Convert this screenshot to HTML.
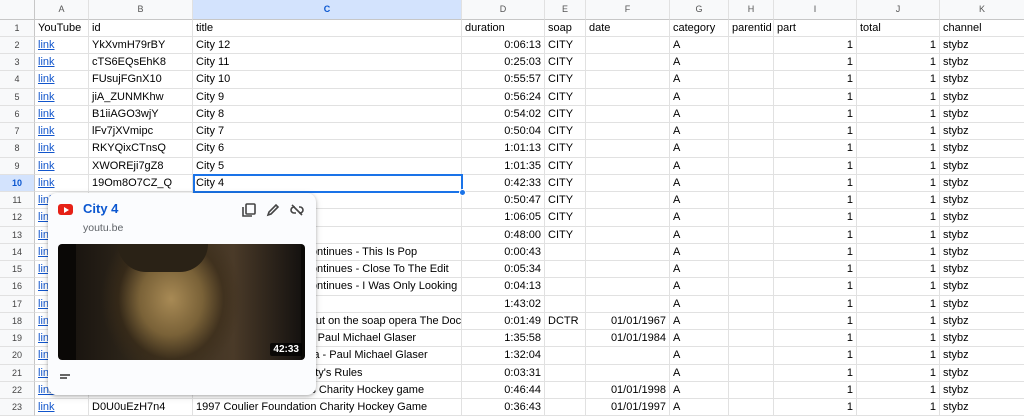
<!DOCTYPE html>
<html><head><meta charset="utf-8"><style>
*{margin:0;padding:0;box-sizing:border-box}
body{width:1024px;height:415px;overflow:hidden;background:#fff;font-family:"Liberation Sans",Arial,sans-serif;font-size:11px;color:#000;position:relative}
.r{position:absolute;left:0;height:17.25px;display:flex;width:1024px}
.r span{display:block;height:100%;border-right:1px solid #e1e1e1;border-bottom:1px solid #e1e1e1;padding:0 3px;line-height:16.5px;white-space:nowrap;overflow:hidden}
.r span:nth-child(1){width:35px;background:#f8f9fa;color:#444;text-align:center;font-size:9px;border-right:1px solid #c7c7c7}
.r span:nth-child(2){width:54px}
.r span:nth-child(3){width:104px}
.r span:nth-child(4){width:269px}
.r span:nth-child(5){width:83px;text-align:right}
.r span:nth-child(6){width:41px}
.r span:nth-child(7){width:84px;text-align:right}
.r span:nth-child(8){width:59px}
.r span:nth-child(9){width:45px}
.r span:nth-child(10){width:83px;text-align:right}
.r span:nth-child(11){width:83px;text-align:right}
.r span:nth-child(12){width:84px;border-right:none}
.r span:nth-child(2) a{color:#1155cc;text-decoration:underline}
.h{top:0;height:19.5px}
.h span{background:#f8f9fa;color:#555;text-align:center!important;font-size:9px;line-height:19px;border-bottom:1px solid #c7c7c7}
.h span.sel{background:#d3e3fd;color:#0b57d0;font-weight:bold}
.r span.rs{background:#d3e3fd;color:#0b57d0;font-weight:bold}
</style></head><body>
<div class="r h"><span></span><span>A</span><span>B</span><span class="sel">C</span><span>D</span><span>E</span><span>F</span><span>G</span><span>H</span><span>I</span><span>J</span><span>K</span></div>
<div class="r" style="top:19.5px"><span>1</span><span>YouTube</span><span>id</span><span>title</span><span style="text-align:left">duration</span><span>soap</span><span style="text-align:left">date</span><span>category</span><span>parentid</span><span style="text-align:left">part</span><span style="text-align:left">total</span><span>channel</span></div>
<div class="r" style="top:36.75px"><span>2</span><span><a>link</a></span><span>YkXvmH79rBY</span><span>City 12</span><span>0:06:13</span><span>CITY</span><span></span><span>A</span><span></span><span>1</span><span>1</span><span>stybz</span></div>
<div class="r" style="top:54px"><span>3</span><span><a>link</a></span><span>cTS6EQsEhK8</span><span>City 11</span><span>0:25:03</span><span>CITY</span><span></span><span>A</span><span></span><span>1</span><span>1</span><span>stybz</span></div>
<div class="r" style="top:71.25px"><span>4</span><span><a>link</a></span><span>FUsujFGnX10</span><span>City 10</span><span>0:55:57</span><span>CITY</span><span></span><span>A</span><span></span><span>1</span><span>1</span><span>stybz</span></div>
<div class="r" style="top:88.5px"><span>5</span><span><a>link</a></span><span>jiA_ZUNMKhw</span><span>City 9</span><span>0:56:24</span><span>CITY</span><span></span><span>A</span><span></span><span>1</span><span>1</span><span>stybz</span></div>
<div class="r" style="top:105.75px"><span>6</span><span><a>link</a></span><span>B1iiAGO3wjY</span><span>City 8</span><span>0:54:02</span><span>CITY</span><span></span><span>A</span><span></span><span>1</span><span>1</span><span>stybz</span></div>
<div class="r" style="top:123px"><span>7</span><span><a>link</a></span><span>lFv7jXVmipc</span><span>City 7</span><span>0:50:04</span><span>CITY</span><span></span><span>A</span><span></span><span>1</span><span>1</span><span>stybz</span></div>
<div class="r" style="top:140.25px"><span>8</span><span><a>link</a></span><span>RKYQixCTnsQ</span><span>City 6</span><span>1:01:13</span><span>CITY</span><span></span><span>A</span><span></span><span>1</span><span>1</span><span>stybz</span></div>
<div class="r" style="top:157.5px"><span>9</span><span><a>link</a></span><span>XWOREji7gZ8</span><span>City 5</span><span>1:01:35</span><span>CITY</span><span></span><span>A</span><span></span><span>1</span><span>1</span><span>stybz</span></div>
<div class="r" style="top:174.75px"><span class="rs">10</span><span><a>link</a></span><span>19Om8O7CZ_Q</span><span>City 4</span><span>0:42:33</span><span>CITY</span><span></span><span>A</span><span></span><span>1</span><span>1</span><span>stybz</span></div>
<div class="r" style="top:192px"><span>11</span><span><a>link</a></span><span></span><span>City 3</span><span>0:50:47</span><span>CITY</span><span></span><span>A</span><span></span><span>1</span><span>1</span><span>stybz</span></div>
<div class="r" style="top:209.25px"><span>12</span><span><a>link</a></span><span></span><span>City 2</span><span>1:06:05</span><span>CITY</span><span></span><span>A</span><span></span><span>1</span><span>1</span><span>stybz</span></div>
<div class="r" style="top:226.5px"><span>13</span><span><a>link</a></span><span></span><span>City 1</span><span>0:48:00</span><span>CITY</span><span></span><span>A</span><span></span><span>1</span><span>1</span><span>stybz</span></div>
<div class="r" style="top:243.75px"><span>14</span><span><a>link</a></span><span></span><span>Our Coronation Story Continues - This Is Pop</span><span>0:00:43</span><span></span><span></span><span>A</span><span></span><span>1</span><span>1</span><span>stybz</span></div>
<div class="r" style="top:261px"><span>15</span><span><a>link</a></span><span></span><span>Our Coronation Story Continues - Close To The Edit</span><span>0:05:34</span><span></span><span></span><span>A</span><span></span><span>1</span><span>1</span><span>stybz</span></div>
<div class="r" style="top:278.25px"><span>16</span><span><a>link</a></span><span></span><span>Our Coronation Story Continues - I Was Only Looking</span><span>0:04:13</span><span></span><span></span><span>A</span><span></span><span>1</span><span>1</span><span>stybz</span></div>
<div class="r" style="top:295.5px"><span>17</span><span><a>link</a></span><span></span><span></span><span>1:43:02</span><span></span><span></span><span>A</span><span></span><span>1</span><span>1</span><span>stybz</span></div>
<div class="r" style="top:312.75px"><span>18</span><span><a>link</a></span><span></span><span>Making her own first debut on the soap opera The Doctors</span><span>0:01:49</span><span>DCTR</span><span>01/01/1967</span><span>A</span><span></span><span>1</span><span>1</span><span>stybz</span></div>
<div class="r" style="top:330px"><span>19</span><span><a>link</a></span><span></span><span>A interview with an actor Paul Michael Glaser</span><span>1:35:58</span><span></span><span>01/01/1984</span><span>A</span><span></span><span>1</span><span>1</span><span>stybz</span></div>
<div class="r" style="top:347.25px"><span>20</span><span><a>link</a></span><span></span><span>The Documentary Drama - Paul Michael Glaser</span><span>1:32:04</span><span></span><span></span><span>A</span><span></span><span>1</span><span>1</span><span>stybz</span></div>
<div class="r" style="top:364.5px"><span>21</span><span><a>link</a></span><span></span><span>Starsky and Hutch Charity's Rules</span><span>0:03:31</span><span></span><span></span><span>A</span><span></span><span>1</span><span>1</span><span>stybz</span></div>
<div class="r" style="top:381.75px"><span>22</span><span><a>link</a></span><span></span><span>199 Coulier Foundations Charity Hockey game</span><span>0:46:44</span><span></span><span>01/01/1998</span><span>A</span><span></span><span>1</span><span>1</span><span>stybz</span></div>
<div class="r" style="top:399px"><span>23</span><span><a>link</a></span><span>D0U0uEzH7n4</span><span>1997 Coulier Foundation Charity Hockey Game</span><span>0:36:43</span><span></span><span>01/01/1997</span><span>A</span><span></span><span>1</span><span>1</span><span>stybz</span></div>

<div style="position:absolute;left:193px;top:174px;width:270px;height:19px;border:2px solid #1a73e8"></div>
<div style="position:absolute;left:459px;top:189px;width:7px;height:7px;border-radius:50%;background:#1a73e8;border:1px solid #fff"></div>

<div style="position:absolute;left:48px;top:193px;width:268px;height:202px;background:#fbfcfe;border-radius:9px;box-shadow:0 1px 3px rgba(0,0,0,.25),0 2px 8px rgba(0,0,0,.12)">
  <div style="position:absolute;left:10px;top:11px;width:15px;height:11px;background:#e62117;border-radius:3px"></div>
  <div style="position:absolute;left:16px;top:14px;width:0;height:0;border-left:5px solid #fff;border-top:3px solid transparent;border-bottom:3px solid transparent"></div>
  <div style="position:absolute;left:35px;top:8px;font-size:13px;font-weight:bold;color:#0b57d0">City 4</div>
  <div style="position:absolute;left:35px;top:29px;font-size:10.5px;color:#5f6368">youtu.be</div>
  <svg style="position:absolute;left:193px;top:9px" width="16" height="16" viewBox="0 0 16 16" fill="none" stroke="#444" stroke-width="1.6"><rect x="5" y="2" width="9" height="10" rx="1"/><path d="M2 5v9h9"/></svg>
  <svg style="position:absolute;left:217px;top:9px" width="16" height="16" viewBox="0 0 16 16" fill="none" stroke="#444" stroke-width="1.6"><path d="M3 13l1-3 7-7 2 2-7 7z"/></svg>
  <svg style="position:absolute;left:241px;top:9px" width="16" height="16" viewBox="0 0 16 16" fill="none" stroke="#444" stroke-width="1.6"><path d="M6 5H5a3 3 0 0 0 0 6h2M10 5h1a3 3 0 0 1 0 6h-1M3 3l10 10"/></svg>
  <div style="position:absolute;left:10px;top:51px;width:247px;height:116px;border-radius:4px;overflow:hidden;background:#0a0806">
    <div style="position:absolute;left:18px;top:0;width:225px;height:116px;background:radial-gradient(ellipse 70px 80px at 95px 55px,#a88a55 0%,#7a6238 45%,rgba(60,45,25,0.6) 75%,transparent 100%),linear-gradient(90deg,#1a1510,#3a3020 40%,#4a3a28 70%,#151210)"></div>
    <div style="position:absolute;left:60px;top:0;width:90px;height:28px;background:#2a2216;border-radius:0 0 40px 40px"></div>
    <div style="position:absolute;right:3px;bottom:4px;background:rgba(0,0,0,.75);color:#fff;font-size:10px;font-weight:bold;padding:1px 3px;border-radius:2px">42:33</div>
  </div>
  <div style="position:absolute;left:12px;top:181px;width:10px;height:1.5px;background:#666"></div>
  <div style="position:absolute;left:12px;top:184px;width:7px;height:1.5px;background:#666"></div>
</div>
</body></html>
